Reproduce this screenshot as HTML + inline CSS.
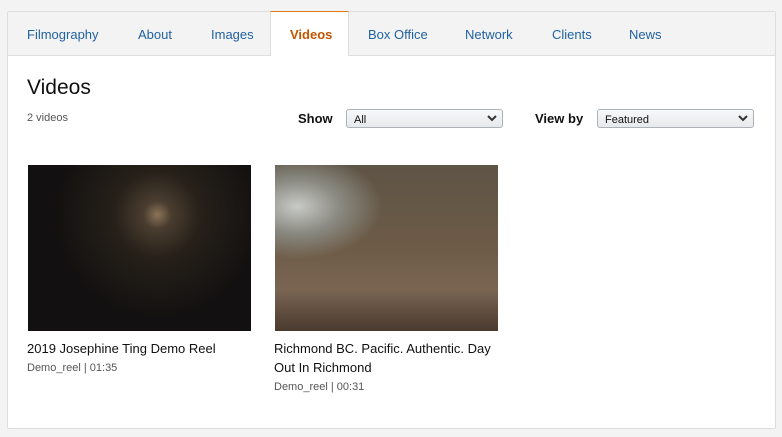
<!DOCTYPE html>
<html><head><style>
body{margin:0;width:782px;height:437px;background:#f3f3f3;font-family:"Liberation Sans",Arial,sans-serif;position:relative;overflow:hidden}
.panel{position:absolute;left:7px;top:11px;width:767px;height:416px;background:#fff;border:1px solid #ddd;border-radius:2px}
.tabs{position:absolute;left:0;top:0;width:767px;height:43px;background:#f3f3f3;border-bottom:1px solid #ddd}
.tab{position:absolute;top:15px;font-size:13px;color:#2162a1}
.active{position:absolute;left:262px;top:-1px;width:77px;height:44px;background:#fff;border-left:1px solid #ddd;border-right:1px solid #ddd;border-top:1px solid #e47911}
.active span{position:absolute;left:19px;top:15px;font-size:13px;font-weight:bold;color:#c45500}
h1{position:absolute;left:19px;top:64px;margin:0;font-size:21px;font-weight:normal;color:#111}
.small{position:absolute;font-size:11px;color:#555}
.lbl{position:absolute;font-size:13px;font-weight:bold;color:#111}
.sel{position:absolute;height:19px;border:1px solid #adb1b8;border-radius:3px;background:linear-gradient(#f7f8fa,#e7e9ec);font-size:11px;color:#111;box-sizing:border-box;padding:4px 7px}
.sel svg{position:absolute;right:5px;top:5px}
.t{position:absolute;font-size:13px;color:#111;line-height:19px}
</style></head><body>
<div class="panel">
<div class="tabs">
<span class="tab" style="left:19px">Filmography</span>
<span class="tab" style="left:130px">About</span>
<span class="tab" style="left:203px">Images</span>
<div class="active"><span>Videos</span></div>
<span class="tab" style="left:360px">Box Office</span>
<span class="tab" style="left:457px">Network</span>
<span class="tab" style="left:544px">Clients</span>
<span class="tab" style="left:621px">News</span>
</div>
<h1>Videos</h1>
<span class="small" style="left:19px;top:100px">2 videos</span>
<span class="lbl" style="left:290px;top:99px">Show</span>
<div class="sel" style="left:338px;top:97px;width:157px">All<svg width="10" height="8"><path d="M1 1l4 4 4-4" stroke="#333" stroke-width="2" fill="none"/></svg></div>
<span class="lbl" style="left:527px;top:99px">View by</span>
<div class="sel" style="left:589px;top:97px;width:157px">Featured<svg width="10" height="8"><path d="M1 1l4 4 4-4" stroke="#333" stroke-width="2" fill="none"/></svg></div>
<div style="position:absolute;left:20px;top:153px;width:223px;height:166px;background:radial-gradient(circle at 58% 30%,#8a7458 0,#4a3d30 8%,#262019 25%,#121010 60%)"></div>
<div style="position:absolute;left:267px;top:153px;width:223px;height:166px;background:radial-gradient(ellipse at 10% 25%,#c8cac6 0,#8a8a82 15%,transparent 30%),linear-gradient(180deg,#5e5446 0%,#6d5b47 50%,#7a6553 75%,#4a3a2e 100%)"></div>
<div class="t" style="left:19px;top:327px">2019 Josephine Ting Demo Reel</div>
<span class="small" style="left:19px;top:350px">Demo_reel | 01:35</span>
<div class="t" style="left:266px;top:327px;width:222px">Richmond BC. Pacific. Authentic. Day Out In Richmond</div>
<span class="small" style="left:266px;top:369px">Demo_reel | 00:31</span>
</div>
</body></html>
